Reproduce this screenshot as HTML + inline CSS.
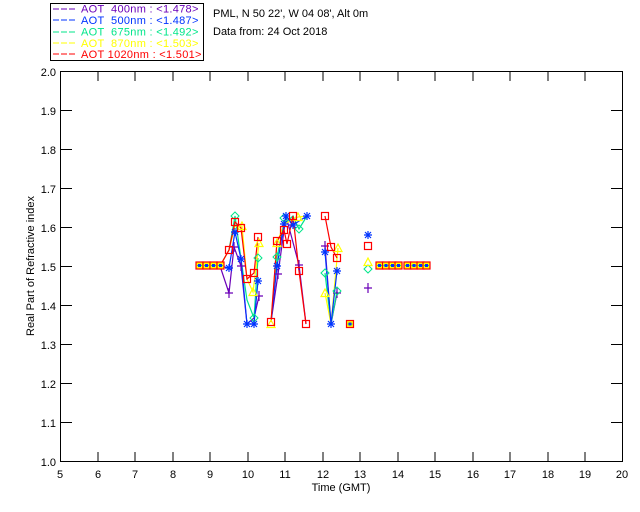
<!DOCTYPE html>
<html><head><meta charset="utf-8"><style>
html,body{margin:0;padding:0;background:#fff;width:640px;height:512px;overflow:hidden}
svg{display:block}
text{font-family:"Liberation Sans",sans-serif;font-size:11px;fill:#000}
.lg{letter-spacing:0.3px}
</style></head><body>
<svg width="640" height="512" viewBox="0 0 640 512" xmlns="http://www.w3.org/2000/svg">
<defs>
<g id="sq"><rect x="-3.5" y="-3.5" width="7" height="7" fill="none" stroke="#ff0000" stroke-width="1.2"/></g>
<g id="as" stroke="#0033ff" stroke-width="1.2"><path d="M-4 0H4M0-4V4M-3-3L3 3M-3 3L3-3"/></g>
<g id="pl" stroke="#6a00b8" stroke-width="1.2"><path d="M-4 0H4M0-5V5"/></g>
<g id="di" fill="none" stroke="#00e68a" stroke-width="1"><path d="M0-4L4 0L0 4L-4 0Z"/></g>
<g id="tr" fill="none" stroke="#ffff00" stroke-width="1.2"><path d="M0-4L4 3.5H-4Z"/></g>
<g id="row"><rect x="-3.5" y="-3.5" width="7" height="7" fill="#ffff00" stroke="#ff0000" stroke-width="1.2"/><rect x="-1.5" y="-1.5" width="3" height="3" fill="#0033ff"/><path d="M-2.5 0h1M1.5 0h1" stroke="#00e68a"/></g>
</defs>
<rect x="50.5" y="3.5" width="153" height="57" fill="none" stroke="#000" stroke-width="1"/>
<g>
<path d="M53 9H76" stroke="#6a00b8" stroke-dasharray="6,2"/><text class="lg" x="81" y="12.5" style="fill:#6a00b8">AOT &#160;400nm : &lt;1.478&gt;</text>
<path d="M53 20H76" stroke="#0033ff" stroke-dasharray="6,2"/><text class="lg" x="81" y="24" style="fill:#0033ff">AOT &#160;500nm : &lt;1.487&gt;</text>
<path d="M53 32H76" stroke="#00e68a" stroke-dasharray="6,2"/><text class="lg" x="81" y="35.5" style="fill:#00e68a">AOT &#160;675nm : &lt;1.492&gt;</text>
<path d="M53 43H76" stroke="#ffff00" stroke-dasharray="6,2"/><text class="lg" x="81" y="47" style="fill:#ffff00">AOT &#160;870nm : &lt;1.503&gt;</text>
<path d="M53 54H76" stroke="#ff0000" stroke-dasharray="6,2"/><text class="lg" x="81" y="58" style="fill:#ff0000">AOT 1020nm : &lt;1.501&gt;</text>
</g>
<text x="213" y="17">PML, N 50 22', W 04 08', Alt 0m</text>
<text x="213" y="35">Data from: 24 Oct 2018</text>
<rect x="60.5" y="71.5" width="562" height="390" fill="none" stroke="#000" stroke-width="1"/>
<g stroke="#000" stroke-width="1">
<path d="M98 461v-9M135 461v-9M173 461v-9M210 461v-9M248 461v-9M285 461v-9M323 461v-9M360 461v-9M398 461v-9M435 461v-9M473 461v-9M510 461v-9M548 461v-9M585 461v-9"/>
<path d="M98 72v9M135 72v9M173 72v9M210 72v9M248 72v9M285 72v9M323 72v9M360 72v9M398 72v9M435 72v9M473 72v9M510 72v9M548 72v9M585 72v9"/>
<path d="M61 110.5h11M61 149.5h11M61 188.5h11M61 227.5h11M61 266.5h11M61 305.5h11M61 344.5h11M61 383.5h11M61 422.5h11"/>
<path d="M622 110.5h-11M622 149.5h-11M622 188.5h-11M622 227.5h-11M622 266.5h-11M622 305.5h-11M622 344.5h-11M622 383.5h-11M622 422.5h-11"/>
</g>
<g text-anchor="end">
<text x="56" y="76">2.0</text><text x="56" y="115">1.9</text><text x="56" y="154">1.8</text><text x="56" y="193">1.7</text><text x="56" y="232">1.6</text><text x="56" y="271">1.5</text><text x="56" y="310">1.4</text><text x="56" y="349">1.3</text><text x="56" y="388">1.2</text><text x="56" y="427">1.1</text><text x="56" y="466">1.0</text>
</g>
<g text-anchor="middle">
<text x="60" y="478">5</text><text x="98" y="478">6</text><text x="135" y="478">7</text><text x="173" y="478">8</text><text x="210" y="478">9</text><text x="248" y="478">10</text><text x="285" y="478">11</text><text x="323" y="478">12</text><text x="360" y="478">13</text><text x="398" y="478">14</text><text x="435" y="478">15</text><text x="473" y="478">16</text><text x="510" y="478">17</text><text x="548" y="478">18</text><text x="585" y="478">19</text><text x="622" y="478">20</text>
<text x="341" y="491">Time (GMT)</text>
<text transform="translate(34 266) rotate(-90)">Real Part of Refractive index</text>
</g>
<g fill="none" stroke-width="1.2">
<path stroke="#6a00b8" d="M220 266L229 293L234 247L241 266L247 324L254 318L259 296M271 322L278 274L286 216L299 265L306 324M325 246L331 324L337 293"/>
<path stroke="#00e68a" d="M220 266L229 250L235 216L241 259L247 300L254 318L258 258M271 322L277 257L284 224L293 216L299 229L307 216M325 273L331 324L337 291"/>
<path stroke="#ffff00" d="M220 266L229 250L235 226L242 226L247 279L253 292L259 243M271 322L277 243L284 224L298 217L307 216M325 293L331 324L338 248"/>
<path stroke="#0033ff" d="M220 266L229 268L235 232L241 259L247 324L254 324L258 281M271 322L277 266L284 224L286 216L293 225L307 216M325 252L331 324L337 271"/>
<path stroke="#ff0000" d="M220 266L229 250L235 222L241 228L247 279L254 273L258 237M271 322L277 241L284 230L287 244L293 216L299 271L306 324M325 216L331 247L337 258"/>
</g>
<use href="#row" x="199.5" y="265.5"/><use href="#row" x="206.5" y="265.5"/><use href="#row" x="213.5" y="265.5"/><use href="#row" x="220.5" y="265.5"/>
<use href="#row" x="379.5" y="265.5"/><use href="#row" x="386" y="265.5"/><use href="#row" x="392.5" y="265.5"/><use href="#row" x="398.5" y="265.5"/>
<use href="#row" x="407.5" y="265.5"/><use href="#row" x="414" y="265.5"/><use href="#row" x="420.5" y="265.5"/><use href="#row" x="426.5" y="265.5"/>
<use href="#row" x="350" y="324"/>
<use href="#pl" x="229" y="293"/><use href="#pl" x="234" y="247"/><use href="#pl" x="241" y="266"/><use href="#pl" x="259" y="296"/><use href="#pl" x="278" y="274"/><use href="#pl" x="299" y="265"/><use href="#pl" x="325" y="246"/><use href="#pl" x="337" y="293"/><use href="#pl" x="368" y="288"/>
<use href="#di" x="235" y="216"/><use href="#di" x="258" y="258"/><use href="#di" x="254" y="318"/><use href="#di" x="277" y="257"/><use href="#di" x="299" y="229"/><use href="#di" x="325" y="273"/><use href="#di" x="337" y="291"/><use href="#di" x="368" y="269"/><use href="#di" x="284" y="218"/>
<use href="#tr" x="242" y="226"/><use href="#tr" x="259" y="243"/><use href="#tr" x="253" y="292"/><use href="#tr" x="277" y="243"/><use href="#tr" x="298" y="217"/><use href="#tr" x="338" y="248"/><use href="#tr" x="325" y="293"/><use href="#tr" x="368" y="262"/><use href="#tr" x="271" y="324"/>
<use href="#as" x="229" y="268"/><use href="#as" x="235" y="232"/><use href="#as" x="241" y="259"/><use href="#as" x="247" y="324"/><use href="#as" x="254" y="324"/><use href="#as" x="258" y="281"/><use href="#as" x="277" y="266"/><use href="#as" x="284" y="224"/><use href="#as" x="286" y="216"/><use href="#as" x="293" y="225"/><use href="#as" x="307" y="216"/><use href="#as" x="325" y="252"/><use href="#as" x="331" y="324"/><use href="#as" x="337" y="271"/><use href="#as" x="368" y="235"/>
<use href="#sq" x="229" y="250"/><use href="#sq" x="235" y="222"/><use href="#sq" x="241" y="228"/><use href="#sq" x="247" y="279"/><use href="#sq" x="254" y="273"/><use href="#sq" x="258" y="237"/><use href="#sq" x="271" y="322"/><use href="#sq" x="277" y="241"/><use href="#sq" x="284" y="230"/><use href="#sq" x="287" y="244"/><use href="#sq" x="293" y="216"/><use href="#sq" x="299" y="271"/><use href="#sq" x="306" y="324"/><use href="#sq" x="325" y="216"/><use href="#sq" x="331" y="247"/><use href="#sq" x="337" y="258"/><use href="#sq" x="368" y="246"/>
</svg>
</body></html>
